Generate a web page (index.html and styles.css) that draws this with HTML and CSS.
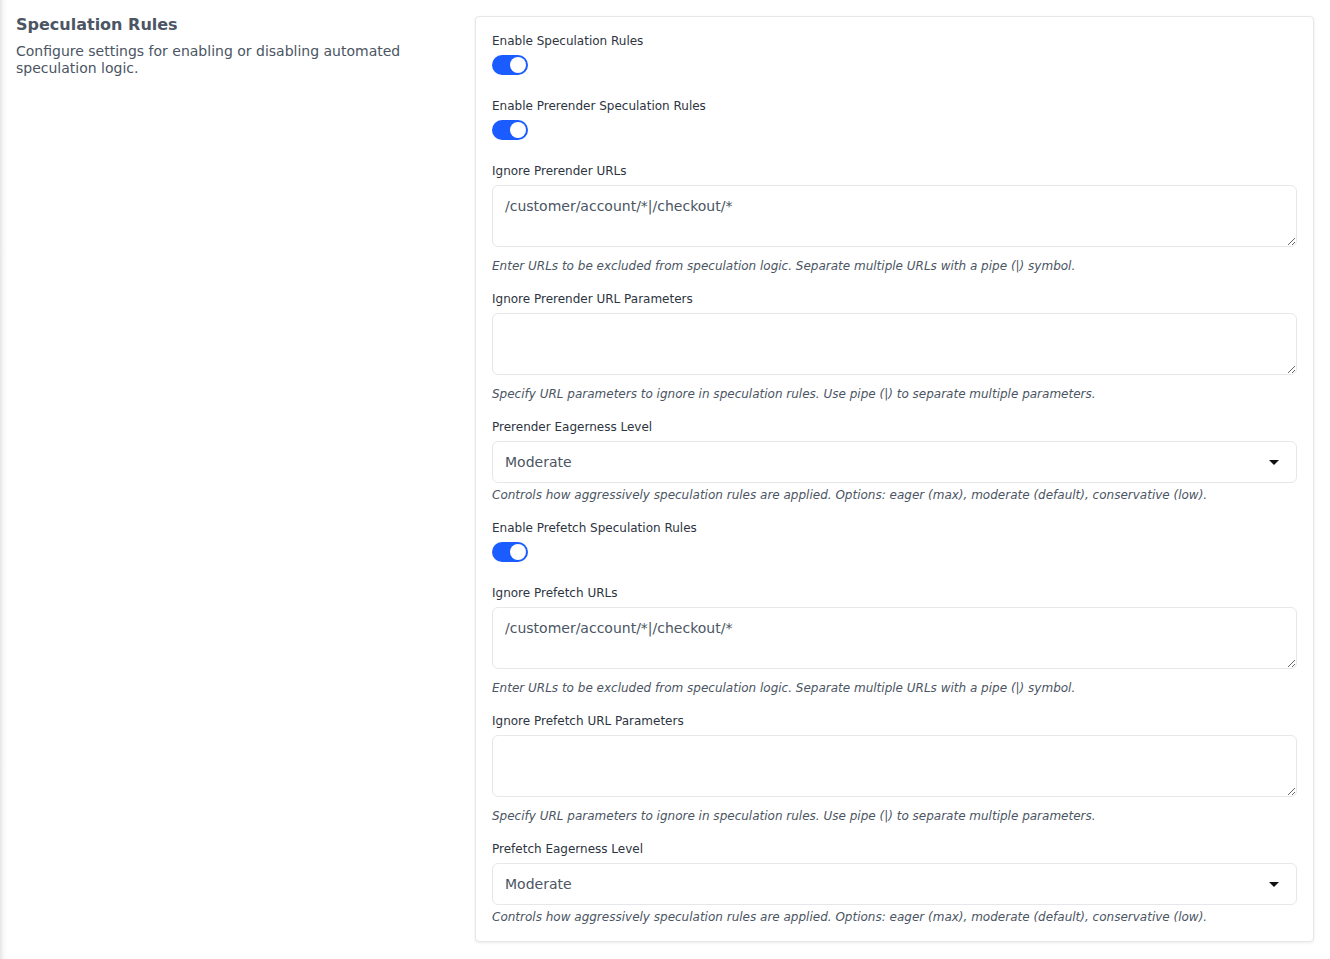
FILE: index.html
```html
<!DOCTYPE html>
<html lang="en">
<head>
<meta charset="utf-8">
<title>Speculation Rules</title>
<link rel="stylesheet" href="styles.css">
</head>
<body>
<div class="page">
  <div class="intro">
    <h2 class="title">Speculation Rules</h2>
    <p class="desc">Configure settings for enabling or disabling automated speculation logic.</p>
  </div>
  <div class="card">
    <div class="field field-toggle">
      <label class="label">Enable Speculation Rules</label>
      <span class="toggle"><span class="knob"></span></span>
    </div>
    <div class="field field-toggle">
      <label class="label">Enable Prerender Speculation Rules</label>
      <span class="toggle"><span class="knob"></span></span>
    </div>
    <div class="field">
      <label class="label">Ignore Prerender URLs</label>
      <textarea class="textarea">/customer/account/*|/checkout/*</textarea>
      <p class="help">Enter URLs to be excluded from speculation logic. Separate multiple URLs with a pipe (|) symbol.</p>
    </div>
    <div class="field">
      <label class="label">Ignore Prerender URL Parameters</label>
      <textarea class="textarea"></textarea>
      <p class="help">Specify URL parameters to ignore in speculation rules. Use pipe (|) to separate multiple parameters.</p>
    </div>
    <div class="field">
      <label class="label">Prerender Eagerness Level</label>
      <div class="select-wrap">
        <select class="select"><option>Moderate</option></select>
        <svg class="caret" width="10" height="5" viewBox="0 0 10 5"><path d="M0 0H10L5 5Z" fill="#111"/></svg>
      </div>
      <p class="help help-tight">Controls how aggressively speculation rules are applied. Options: eager (max), moderate (default), conservative (low).</p>
    </div>
    <div class="field field-toggle">
      <label class="label">Enable Prefetch Speculation Rules</label>
      <span class="toggle"><span class="knob"></span></span>
    </div>
    <div class="field">
      <label class="label">Ignore Prefetch URLs</label>
      <textarea class="textarea">/customer/account/*|/checkout/*</textarea>
      <p class="help">Enter URLs to be excluded from speculation logic. Separate multiple URLs with a pipe (|) symbol.</p>
    </div>
    <div class="field">
      <label class="label">Ignore Prefetch URL Parameters</label>
      <textarea class="textarea"></textarea>
      <p class="help">Specify URL parameters to ignore in speculation rules. Use pipe (|) to separate multiple parameters.</p>
    </div>
    <div class="field">
      <label class="label">Prefetch Eagerness Level</label>
      <div class="select-wrap">
        <select class="select"><option>Moderate</option></select>
        <svg class="caret" width="10" height="5" viewBox="0 0 10 5"><path d="M0 0H10L5 5Z" fill="#111"/></svg>
      </div>
      <p class="help help-tight">Controls how aggressively speculation rules are applied. Options: eager (max), moderate (default), conservative (low).</p>
    </div>
  </div>
</div>
</body>
</html>
```
FILE: styles.css
```css
* { box-sizing: border-box; }
html, body { margin: 0; padding: 0; }
body {
  font-family: "DejaVu Sans", sans-serif;
  background: linear-gradient(to right, #e6e6e6 0, #f6f6f6 3px, #ffffff 7px);
  color: #1f2937;
  min-height: 959px;
}
.page {
  display: grid;
  grid-template-columns: 427px 1fr;
  column-gap: 32px;
  padding: 13px 16px 16px 16px;
  align-items: start;
}
.title {
  margin: 0;
  font-size: 16px;
  line-height: 24px;
  font-weight: bold;
  color: #4b5563;
}
.desc {
  margin: 6px 0 0 0;
  font-size: 14px;
  line-height: 17px;
  color: #4b5563;
}
.card {
  margin-top: 3px;
  background: #fff;
  border: 1px solid #e5e7eb;
  border-radius: 4px;
  box-shadow: 0 1px 3px rgba(0,0,0,0.08);
  padding: 15px 16px 15px 16px;
  display: flex;
  flex-direction: column;
  gap: 15px;
}
.field { display: flex; flex-direction: column; }
.field-toggle { padding-bottom: 7px; }
.label {
  font-size: 12px;
  line-height: 18px;
  color: #2d3440;
  margin-bottom: 5px;
}
.toggle {
  width: 36px;
  height: 20px;
  border-radius: 10px;
  background: #1a5cff;
  display: flex;
  align-items: center;
  justify-content: flex-end;
  padding-right: 2px;
}
.knob {
  width: 16px;
  height: 16px;
  border-radius: 50%;
  background: #fff;
}
.textarea {
  display: block;
  width: 100%;
  height: 62px;
  border: 1px solid #e5e7eb;
  border-radius: 6px;
  padding: 10px 12px;
  font-family: "DejaVu Sans", sans-serif;
  font-size: 14px;
  line-height: 20px;
  color: #4b5563;
  resize: vertical;
  margin: 0 0 10px 0;
  outline: none;
}
.help {
  margin: 0;
  font-size: 12px;
  line-height: 18px;
  font-style: italic;
  color: #4b5563;
}
.help-tight { margin-top: 3px; }
.select-wrap { position: relative; }
.select {
  display: block;
  width: 100%;
  height: 42px;
  border: 1px solid #e5e7eb;
  border-radius: 6px;
  padding: 10px 12px;
  font-family: "DejaVu Sans", sans-serif;
  font-size: 14px;
  line-height: 20px;
  color: #4b5563;
  background: #fff;
  -webkit-appearance: none;
  appearance: none;
  outline: none;
}
.caret {
  position: absolute;
  right: 18px;
  top: 19px;
  pointer-events: none;
}
```
